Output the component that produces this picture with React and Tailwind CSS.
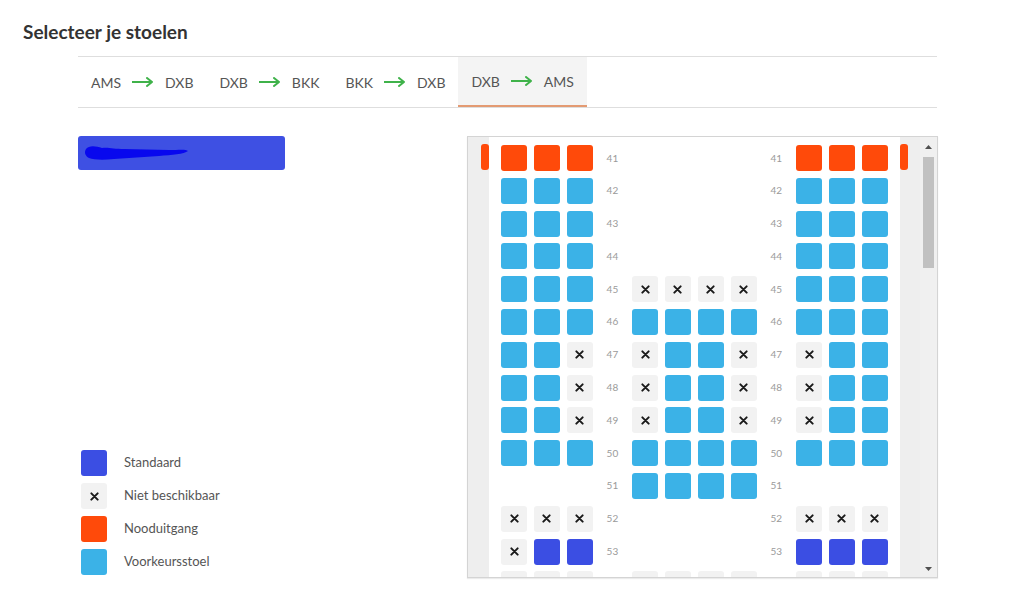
import React from "react";

const ROWS = [
  ["41", "OOO", "....", "OOO"],
  ["42", "BBB", "....", "BBB"],
  ["43", "BBB", "....", "BBB"],
  ["44", "BBB", "....", "BBB"],
  ["45", "BBB", "XXXX", "BBB"],
  ["46", "BBB", "BBBB", "BBB"],
  ["47", "BBX", "XBBX", "XBB"],
  ["48", "BBX", "XBBX", "XBB"],
  ["49", "BBX", "XBBX", "XBB"],
  ["50", "BBB", "BBBB", "BBB"],
  ["51", "...", "BBBB", "..."],
  ["52", "XXX", "....", "XXX"],
  ["53", "XDD", "....", "DDD"],
  ["", "XXX", "XXXX", "XXX"],
  ["", "XXX", "XXXX", "XXX"],
];

function Cross({ size = 9 }) {
  return (
    <svg width={size} height={size} viewBox="0 0 10 10">
      <path d="M1.5 1.5 L8.5 8.5 M8.5 1.5 L1.5 8.5" stroke="#1a1a1a" strokeWidth="2.2" strokeLinecap="round" />
    </svg>
  );
}

function Seat({ t }) {
  if (t === ".") return <div />;
  if (t === "X")
    return (
      <div className="w-[26px] h-[26px] rounded-[3px] bg-[#f2f2f2] flex items-center justify-center">
        <Cross />
      </div>
    );
  const cls =
    t === "O" ? "bg-[#ff4a0a]" : t === "D" ? "bg-[#3b4ee3]" : "bg-[#3bb2e7]";
  return <div className={`w-[26px] h-[26px] rounded-[3px] ${cls}`} />;
}

function Label({ n }) {
  return (
    <div className="w-[26px] h-[26px] flex items-center justify-center text-[10px] text-[#9a9a9a]">
      {n}
    </div>
  );
}

function Arrow() {
  return (
    <svg width="22" height="10" viewBox="0 0 22 10" className="mx-[11px]">
      <path d="M0 5 H20 M15 1 L20 5 L15 9" stroke="#3fb24a" strokeWidth="2" fill="none" strokeLinecap="round" strokeLinejoin="round" />
    </svg>
  );
}

function Tab({ a, b, active }) {
  return (
    <div
      className={`h-[50px] pl-[13px] pr-[13px] flex items-center text-[14px] text-[#555] ${
        active ? "bg-[#f4f4f4] border-b-2 border-[#e39a72]" : ""
      }`}
    >
      <span>{a}</span>
      <Arrow />
      <span>{b}</span>
    </div>
  );
}

function LegendItem({ box, label }) {
  return (
    <div className="flex items-center h-[26px]">
      <div className="ml-[3px] w-[26px]">{box}</div>
      <span className="ml-[17px] text-[13px] text-[#555]">{label}</span>
    </div>
  );
}

export default function App() {
  return (
    <div
      className="w-[1024px] h-[615px] bg-white overflow-hidden"
      style={{ fontFamily: "Lato, 'Open Sans', sans-serif" }}
    >
      <div className="pl-[23px] pt-[18px] h-[56px] text-[19px] font-bold text-[#333]">
        Selecteer je stoelen
      </div>
      <div className="ml-[78px] w-[859px]">
        <div className="border-t border-b border-[#dedede] flex">
          <Tab a="AMS" b="DXB" />
          <Tab a="DXB" b="BKK" />
          <Tab a="BKK" b="DXB" />
          <Tab a="DXB" b="AMS" active />
        </div>
        <div className="flex mt-[28px]">
          <div className="w-[389px] shrink-0">
            <div className="w-[207px] h-[34px] rounded-[3px] bg-[#3e50e3] flex items-center pl-[6px]">
              <svg width="106" height="20" viewBox="0 0 106 20">
                <path
                  d="M2 6 C5 2 12 3 18 5 C24 4 30 6 40 6 C55 6 70 7 85 7 C95 7 102 6 104 8 C100 11 88 12 75 13 C60 14 45 15 30 16 C20 17 10 17 5 15 C1 13 0 9 2 6 Z"
                  fill="#0808ee"
                />
              </svg>
            </div>
            <div className="mt-[280px] flex flex-col gap-[7px]">
              <LegendItem box={<div className="w-[26px] h-[26px] rounded-[3px] bg-[#3b4ee3]" />} label="Standaard" />
              <LegendItem
                box={
                  <div className="w-[26px] h-[26px] rounded-[3px] bg-[#f2f2f2] flex items-center justify-center">
                    <Cross />
                  </div>
                }
                label="Niet beschikbaar"
              />
              <LegendItem box={<div className="w-[26px] h-[26px] rounded-[3px] bg-[#ff4a0a]" />} label="Nooduitgang" />
              <LegendItem box={<div className="w-[26px] h-[26px] rounded-[3px] bg-[#3bb2e7]" />} label="Voorkeursstoel" />
            </div>
          </div>
          <div className="w-[471px] h-[442px] border border-[#d4d4d4] flex shadow-[0_1px_1px_rgba(0,0,0,0.08)]">
            <div className="w-[452px] h-full overflow-hidden flex">
              <div className="w-[21px] bg-[#eeeeee] pt-[7px] flex justify-end shrink-0">
                <div className="w-[8px] h-[26px] rounded-[3px] bg-[#ff4a0a]" />
              </div>
              <div className="w-[411px] bg-white pl-[12px] pt-[8px] shrink-0">
                <div className="grid grid-cols-[repeat(12,26px)] auto-rows-[26px] gap-[6.8px]">
                  {ROWS.map(([n, l, m, r], ri) => (
                    <React.Fragment key={ri}>
                      {l.split("").map((t, i) => (
                        <Seat key={"l" + i} t={t} />
                      ))}
                      <Label n={n} />
                      {m.split("").map((t, i) => (
                        <Seat key={"m" + i} t={t} />
                      ))}
                      <Label n={n} />
                      {r.split("").map((t, i) => (
                        <Seat key={"r" + i} t={t} />
                      ))}
                    </React.Fragment>
                  ))}
                </div>
              </div>
              <div className="w-[20px] bg-[#eeeeee] pt-[7px] flex justify-start shrink-0">
                <div className="w-[8px] h-[26px] rounded-[3px] bg-[#ff4a0a]" />
              </div>
            </div>
            <div className="w-[17px] h-full bg-[#f0f0f0] flex flex-col items-center">
              <div className="h-[20px] flex items-center justify-center">
                <svg width="7" height="4" viewBox="0 0 7 4">
                  <path d="M0 4 L3.5 0 L7 4 Z" fill="#505050" />
                </svg>
              </div>
              <div className="w-[11px] h-[111px] bg-[#c1c1c1]" />
              <div className="flex-1" />
              <div className="h-[16px] flex items-center justify-center">
                <svg width="7" height="4" viewBox="0 0 7 4">
                  <path d="M0 0 L7 0 L3.5 4 Z" fill="#505050" />
                </svg>
              </div>
            </div>
          </div>
        </div>
      </div>
    </div>
  );
}
